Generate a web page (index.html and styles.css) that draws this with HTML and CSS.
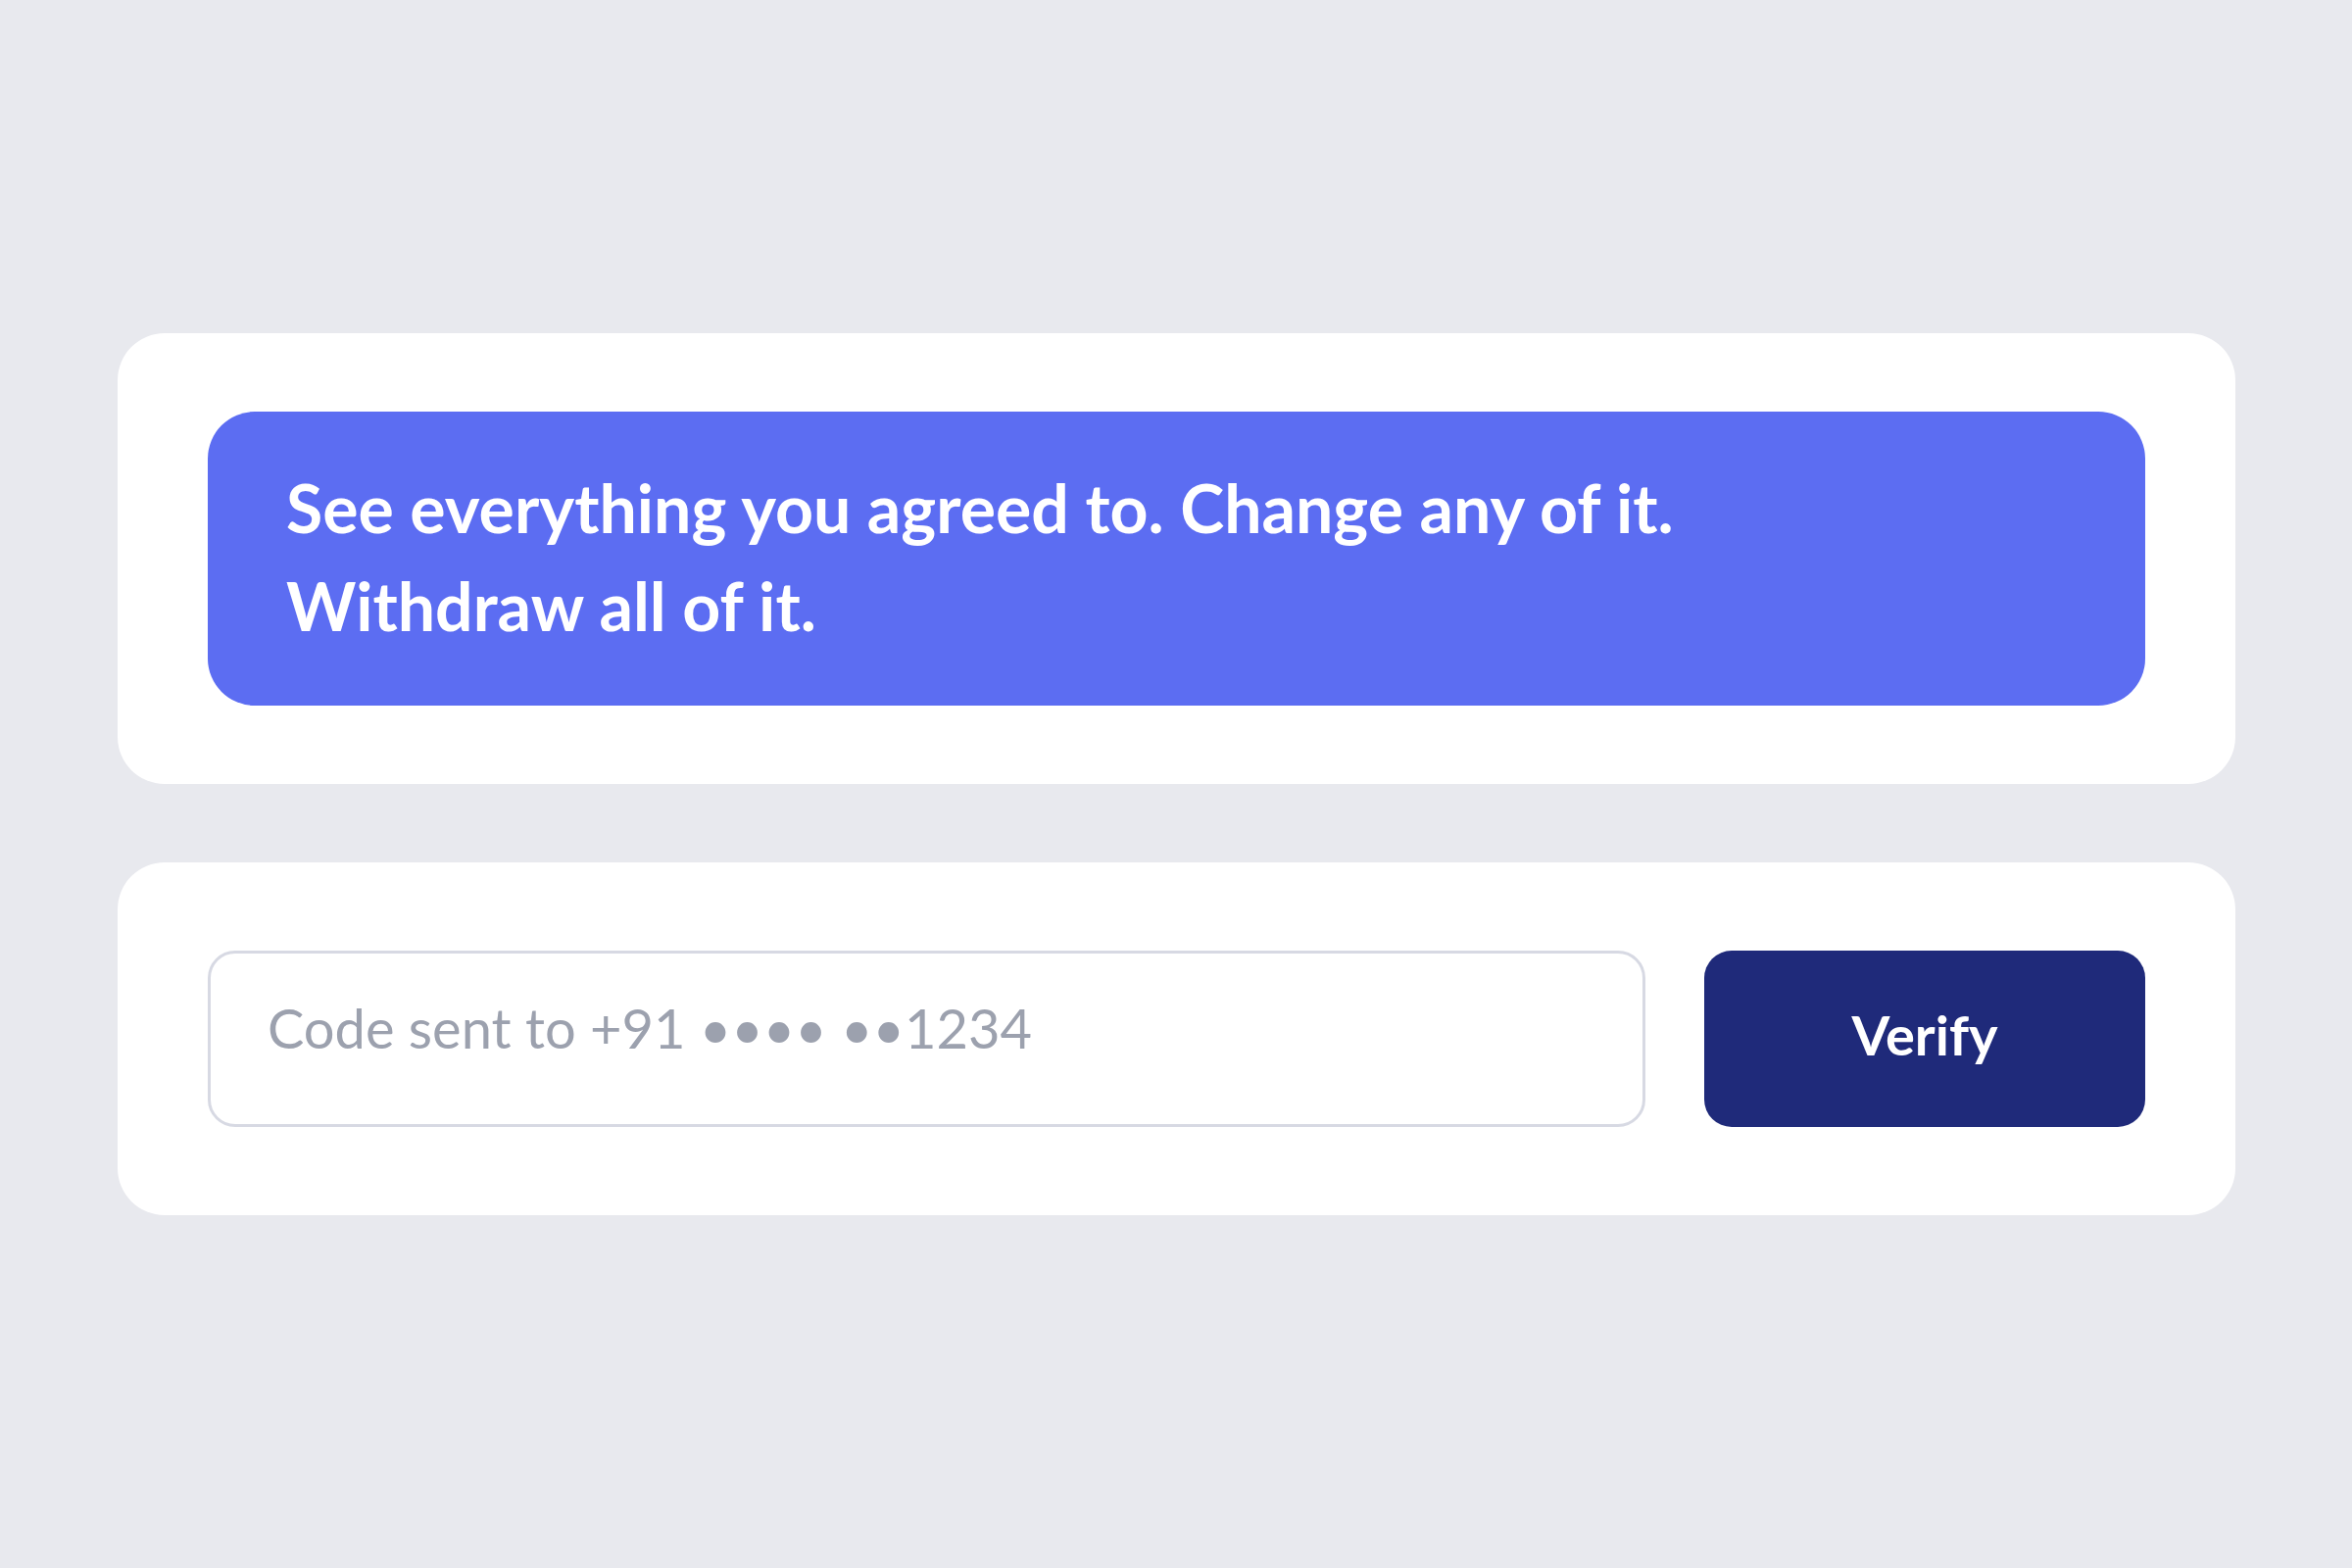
FILE: index.html
```html
<!DOCTYPE html>
<html lang="en">
<head>
    <meta charset="UTF-8">
    <meta name="viewport" content="width=device-width, initial-scale=1.0">
    <title>Consent</title>
    <link rel="stylesheet" href="styles.css">
</head>
<body>
    <div class="page">
        <div class="card card-banner">
            <div class="banner">
                <p>See everything you agreed to. Change any of it. Withdraw all of it.</p>
            </div>
        </div>

        <div class="card card-verify">
            <input type="text" class="code-input" placeholder="Code sent to +91 •••• ••1234">
            <button type="button" class="verify-btn">Verify</button>
        </div>
    </div>
</body>
</html>
```

FILE: styles.css
```css
/* General Styles */
body {
    font-family: Lato, "Liberation Sans", sans-serif;
    background-color: #e8e9ee;
    margin: 0;
}

.page {
    padding: 340px 119px 0 120px;
    display: flex;
    flex-direction: column;
    gap: 80px;
}

.card {
    background: #fff;
    border-radius: 48px;
}

.card-banner {
    padding: 80px 92px;
}

.banner {
    background-color: #5c6df2;
    border-radius: 48px;
    padding: 48px 80px 52px;
    color: #fff;
}

.banner p {
    margin: 0;
    max-width: 1500px;
    font-size: 68px;
    line-height: 100px;
    font-weight: 700;
}

.card-verify {
    padding: 90px 92px;
    display: flex;
    gap: 60px;
}

.code-input {
    flex: 1;
    height: 180px;
    box-sizing: border-box;
    border: 3px solid #d7d9e3;
    border-radius: 28px;
    padding: 0 58px 24px;
    font-family: Lato, "Liberation Sans", sans-serif;
    font-size: 56px;
    color: #1f2937;
    background: #fff;
}

.code-input::placeholder {
    color: #9ca1ae;
}

.code-input:focus {
    outline: none;
}

.verify-btn {
    width: 450px;
    height: 180px;
    border: none;
    border-radius: 28px;
    padding: 0 0 10px;
    background-color: #1f2a7a;
    color: #fff;
    font-family: Lato, "Liberation Sans", sans-serif;
    font-size: 56px;
    font-weight: 700;
    cursor: pointer;
}
```
